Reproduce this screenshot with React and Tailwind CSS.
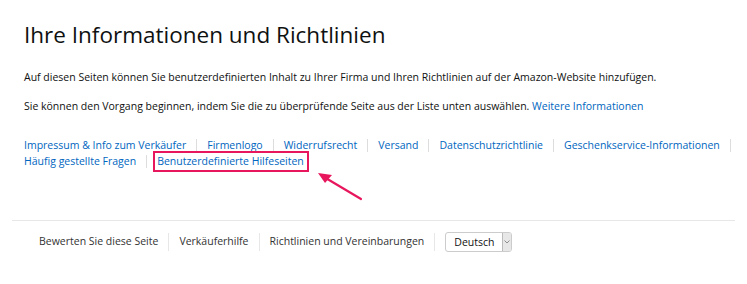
import React from "react";

const links = [
  "Impressum & Info zum Verkäufer",
  "Firmenlogo",
  "Widerrufsrecht",
  "Versand",
  "Datenschutzrichtlinie",
  "Geschenkservice-Informationen",
  "Häufig gestellte Fragen",
];

const Sep = ({ h = "h-[13px]", c = "bg-[#ddd]" }) => <span className={`mx-[10px] w-px ${h} ${c}`} />;

const App = () => {
  return (
    <div className="relative w-[747px] h-[284px] bg-white font-['Open_Sans',sans-serif] text-[#0f1111] overflow-hidden">
      <div className="pl-6 pr-1 pt-[20px]">
        <h1 className="text-[22.5px] leading-[30px] font-normal">Ihre Informationen und Richtlinien</h1>

        <p className="mt-[19px] text-[10.5px] leading-4">
          Auf diesen Seiten können Sie benutzerdefinierten Inhalt zu Ihrer Firma und Ihren Richtlinien auf der Amazon-Website hinzufügen.
        </p>
        <p className="mt-[13px] text-[10.5px] leading-4">
          Sie können den Vorgang beginnen, indem Sie die zu überprüfende Seite aus der Liste unten auswählen.{" "}
          <span className="text-[#0066c0]">Weitere Informationen</span>
        </p>

        {/* Seitenliste */}
        <div className="mt-[23px] text-[10.5px] leading-4 text-[#0066c0] flex flex-wrap items-center whitespace-nowrap">
          {links.map((l) => (
            <span key={l} className="flex items-center">
              <span>{l}</span>
              <Sep />
            </span>
          ))}
          <span className="relative">
            Benutzerdefinierte Hilfeseiten
            <span className="absolute -left-[4px] -right-[5px] -top-[2px] -bottom-[3px] border-2 border-[#e8175d]" />
          </span>
        </div>
      </div>

      {/* Pfeil */}
      <svg className="absolute left-[310px] top-[165px]" width="60" height="40" viewBox="0 0 60 40">
        <line x1="51" y1="34" x2="14" y2="12" stroke="#e8175d" strokeWidth="2.2" strokeLinecap="round" />
        <polygon points="8,8 22,10 15,18" fill="#e8175d" />
      </svg>

      <div className="mx-3 mt-[51px] border-t border-[#e7e7e7]" />

      {/* Fußzeile */}
      <div className="flex items-center pl-[39px] mt-[11px] text-[10.5px] text-[#333]">
        <span>Bewerten Sie diese Seite</span>
        <Sep h="h-[18px]" c="bg-[#e7e7e7]" />
        <span>Verkäuferhilfe</span>
        <Sep h="h-[18px]" c="bg-[#e7e7e7]" />
        <span>Richtlinien und Vereinbarungen</span>
        <Sep h="h-[18px]" c="bg-[#e7e7e7]" />
        <div className="flex h-[20px] border border-[#ccc] rounded-[3px] overflow-hidden">
          <span className="px-[8px] leading-[18px] text-[#111]">Deutsch</span>
          <span className="w-[9px] bg-[#e7e7e7] border-l border-[#bbb] flex items-center justify-center">
            <svg width="6" height="4" viewBox="0 0 6 4">
              <path d="M0.5 0.5 L3 3 L5.5 0.5" fill="none" stroke="#777" strokeWidth="0.8" />
            </svg>
          </span>
        </div>
      </div>
    </div>
  );
};

export default App;
